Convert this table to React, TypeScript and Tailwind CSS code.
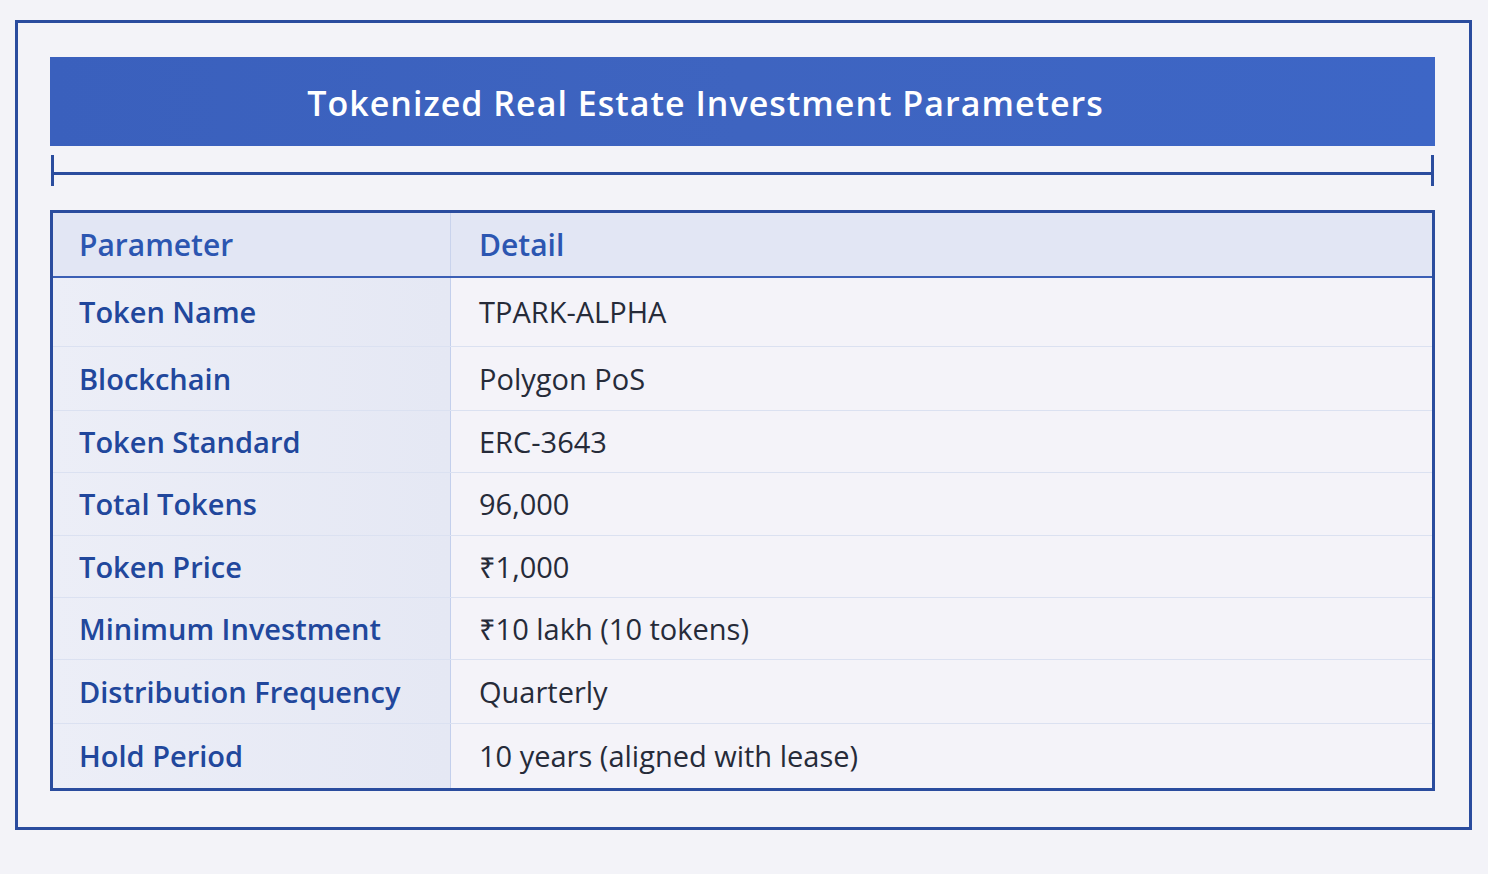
const ROWS: { label: string; value: string; h: string }[] = [
  { label: 'Token Name', value: 'TPARK-ALPHA', h: 'h-[69px]' },
  { label: 'Blockchain', value: 'Polygon PoS', h: 'h-[64px]' },
  { label: 'Token Standard', value: 'ERC-3643', h: 'h-[62px]' },
  { label: 'Total Tokens', value: '96,000', h: 'h-[63px]' },
  { label: 'Token Price', value: '₹1,000', h: 'h-[62px]' },
  { label: 'Minimum Investment', value: '₹10 lakh (10 tokens)', h: 'h-[62px]' },
  { label: 'Distribution Frequency', value: 'Quarterly', h: 'h-[64px]' },
  { label: 'Hold Period', value: '10 years (aligned with lease)', h: 'h-[64px]' },
];

export default function App() {
  return (
    <div className="h-[874px] w-[1488px] bg-[#f3f3f8] pt-[20px] pl-[15px] font-['Open_Sans','Noto_Sans',sans-serif]">
      <div className="h-[810px] w-[1457px] border-[3px] border-[#2a4c9e] px-[32px] pt-[34px]">
        {/* title banner */}
        <div className="flex h-[89px] w-[1385px] items-center justify-center bg-gradient-to-r from-[#3a60bd] via-[#3e64c0] to-[#3d66c6] pt-[3px] pr-[74px] text-[34px] font-semibold tracking-[0.03em] text-white">
          Tokenized Real Estate Investment Parameters
        </div>

        {/* bracket rule */}
        <div className="mt-[9px] flex h-[31px] w-[1385px] items-center px-[1px]">
          <span className="h-full w-[3px] bg-[#2a4c9e]" />
          <span className="mt-[6px] h-[3px] flex-1 bg-[#2a4c9e]" />
          <span className="h-full w-[3px] bg-[#2a4c9e]" />
        </div>

        {/* table */}
        <div className="mt-[24px] w-[1385px] border-[3px] border-[#2a4c9e] bg-[#f4f3f9]">
          <div className="flex h-[65px] items-center border-b-2 border-[#3b5fb5] bg-[#e2e6f4] text-[30px] font-semibold text-[#2c56b1]">
            <div className="flex h-full w-[398px] items-center border-r border-[#c9d3ec] pl-[26px]">
              Parameter
            </div>
            <div className="pl-[28px]">Detail</div>
          </div>
          {ROWS.map((r, i) => (
            <div
              key={r.label}
              className={`flex ${r.h} ${i < ROWS.length - 1 ? 'border-b border-[#dbe1f1]' : ''}`}
            >
              <div className="flex w-[398px] items-center border-r border-[#c3cfec] bg-gradient-to-r from-[#eceef7] to-[#e5e8f4] pl-[26px] text-[29px] font-semibold text-[#21479c]">
                {r.label}
              </div>
              <div className="flex flex-1 items-center pl-[28px] text-[29px] text-[#262b39]">
                {r.value}
              </div>
            </div>
          ))}
        </div>
      </div>
    </div>
  );
}
